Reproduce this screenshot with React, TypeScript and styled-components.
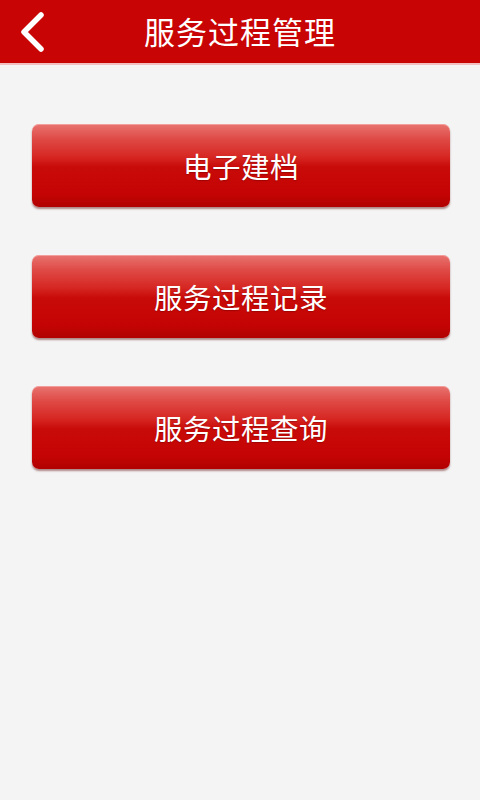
import React from 'react';
import styled, { createGlobalStyle } from 'styled-components';

const GlobalStyle = createGlobalStyle`
  html, body {
    margin: 0;
    padding: 0;
    background: #f4f4f4;
  }
  body {
    font-family: "Noto Sans CJK SC", "Noto Sans", sans-serif;
  }
`;

const Page = styled.div`
  width: 480px;
  min-height: 800px;
  background: #f4f4f4;
`;

const Header = styled.header`
  position: relative;
  height: 63px;
  background: #c80404;
  border-bottom: 2px solid #f2c0c0;
  display: flex;
  align-items: center;
  justify-content: center;
`;

const BackButton = styled.button`
  position: absolute;
  left: 14px;
  top: 9px;
  width: 38px;
  height: 46px;
  border: 0;
  padding: 0;
  background: transparent;
  cursor: pointer;

  svg {
    display: block;
  }
`;

const Title = styled.h1`
  margin: 0 0 2px;
  font-size: 31px;
  font-weight: 400;
  color: #ffffff;
  letter-spacing: 1px;
`;

const Menu = styled.nav`
  display: flex;
  flex-direction: column;
  gap: 48px;
  padding: 59px 30px 0 32px;
`;

const MenuButton = styled.button`
  height: 83px;
  border: 0;
  border-radius: 7px;
  background: linear-gradient(
    to bottom,
    #e87470 0%,
    #df4a46 18%,
    #d62622 40%,
    #c80a08 52%,
    #c40404 85%,
    #b00000 100%
  );
  box-shadow: 0 2px 2px rgba(90, 0, 0, 0.45), inset 0 1px 0 rgba(255, 200, 200, 0.5);
  color: #ffffff;
  font-family: "Noto Sans CJK SC", "Noto Sans", sans-serif;
  font-size: 28.5px;
  letter-spacing: 0.5px;
  text-shadow: 0 1px 1px rgba(100, 0, 0, 0.4);
  cursor: pointer;
`;

const items = ['电子建档', '服务过程记录', '服务过程查询'];

export default function App() {
  return (
    <Page>
      <GlobalStyle />
      <Header>
        <BackButton aria-label="返回">
          <svg width="38" height="46" viewBox="0 0 38 46">
            <path
              d="M27 6 L10 23 L27 40"
              fill="none"
              stroke="#ffffff"
              strokeWidth="5.5"
              strokeLinecap="round"
              strokeLinejoin="round"
            />
          </svg>
        </BackButton>
        <Title>服务过程管理</Title>
      </Header>
      <Menu>
        {items.map((label) => (
          <MenuButton key={label}>{label}</MenuButton>
        ))}
      </Menu>
    </Page>
  );
}
